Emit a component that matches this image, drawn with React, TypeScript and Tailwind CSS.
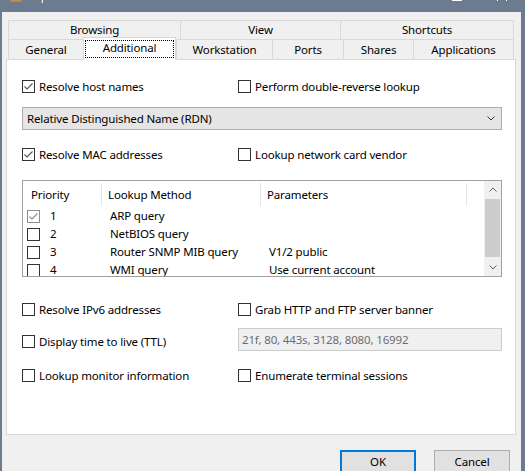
import type { ReactNode } from "react";

function Check({ checked = false, muted = false }: { checked?: boolean; muted?: boolean }) {
  return (
    <span
      className={[
        "flex h-[13px] w-[13px] shrink-0 items-center justify-center border bg-white",
        muted ? "border-[#8c8c8c]" : "border-[#333333]",
      ].join(" ")}
    >
      {checked && (
        <svg width="11" height="11" viewBox="0 0 11 11">
          <path d="M1.5 5.5 L4 8 L9.5 2.5" fill="none" stroke={muted ? "#8c8c8c" : "#555555"} strokeWidth="1.1" />
        </svg>
      )}
    </span>
  );
}

function CheckLabel({ children, checked }: { children: ReactNode; checked?: boolean }) {
  return (
    <label className="flex h-[17px] items-center gap-[4px]">
      <Check checked={checked} />
      <span className="whitespace-nowrap">{children}</span>
    </label>
  );
}

function Chevron({ up = false, color = "#606060" }: { up?: boolean; color?: string }) {
  return (
    <svg width="8" height="5" viewBox="0 0 8 5">
      <path d={up ? "M0.5 4.5 L4 1 L7.5 4.5" : "M0.5 0.5 L4 4 L7.5 0.5"} fill="none" stroke={color} strokeWidth="1" />
    </svg>
  );
}

const topTabs = [
  { label: "Browsing", w: "w-[172px]" },
  { label: "View", w: "w-[160px]" },
  { label: "Shortcuts", w: "w-[174px] border-r" },
];

const lowTabs = [
  { label: "General", w: "w-[75px]" },
  { label: "Additional", w: "w-[93px]", active: true },
  { label: "Workstation", w: "w-[96px]" },
  { label: "Ports", w: "w-[71px]" },
  { label: "Shares", w: "w-[70px]" },
  { label: "Applications", w: "w-[101px] border-r" },
];

const methods = [
  { n: 1, name: "ARP query", params: "", on: true },
  { n: 2, name: "NetBIOS query", params: "" },
  { n: 3, name: "Router SNMP MIB query", params: "V1/2 public" },
  { n: 4, name: "WMI query", params: "Use current account" },
];

export default function App() {
  return (
    <div className="h-[471px] w-[525px] overflow-hidden bg-[#6c7b90] font-['Noto_Sans',sans-serif] text-[11.5px] tracking-[-0.15px] text-black">
      {/* title bar, mostly cropped */}
      <div className="h-[12px] overflow-hidden">
        <div className="-mt-[13px] flex h-[18px] items-center pl-[10px] pr-[18px]">
          <span className="h-[12px] w-[12px] rounded-[2px] bg-[#c8874a]" />
          <span className="ml-[10px] text-white">Options</span>
          <div className="ml-auto flex items-center gap-[35px]">
            <svg width="10" height="10" viewBox="0 0 10 10">
              <rect x="0" y="9" width="10" height="1" fill="#ffffff" />
            </svg>
            <svg width="10" height="10" viewBox="0 0 10 10">
              <path d="M0 0 L10 10 M10 0 L0 10" stroke="#ffffff" strokeWidth="1" />
            </svg>
          </div>
        </div>
      </div>

      <div className="ml-[2px] mr-[4px] h-[459px] bg-[#f0f0f0] pl-[4px] pt-[8px]">
        {/* tabs */}
        <div className="ml-[2px] flex h-[19px]">
          {topTabs.map((t) => (
            <div
              key={t.label}
              className={`flex items-center justify-center border-l border-t border-[#d9d9d9] ${t.w}`}
            >
              {t.label}
            </div>
          ))}
        </div>
        <div className="ml-[2px] flex h-[20px] items-start">
          {lowTabs.map((t) =>
            t.active ? (
              <div
                key={t.label}
                className={`relative z-10 -mt-[2px] h-[23px] border-l border-r border-t border-[#d9d9d9] bg-white ${t.w}`}
              >
                <div className="mx-[1px] mt-[2px] flex h-[18px] items-center justify-center border border-dotted border-black pb-[2px]">
                  {t.label}
                </div>
              </div>
            ) : (
              <div
                key={t.label}
                className={`flex h-[20px] items-center justify-center border-l border-t border-[#d9d9d9] pt-[1px] ${t.w}`}
              >
                {t.label}
              </div>
            )
          )}
        </div>

        {/* panel */}
        <div className="h-[376px] w-[510px] border border-[#d9d9d9] bg-white pl-[15px] pt-[18px]">
          <div className="grid w-[480px] grid-cols-[216px_1fr]">
            <CheckLabel checked>Resolve host names</CheckLabel>
            <CheckLabel>Perform double-reverse lookup</CheckLabel>
          </div>

          <div className="mt-[12px] flex h-[23px] w-[480px] items-center border border-[#adadad] bg-[#e5e5e5] pl-[4px] pr-[6px]">
            <span>Relative Distinguished Name (RDN)</span>
            <span className="ml-auto">
              <Chevron color="#333333" />
            </span>
          </div>

          <div className="mt-[16px] grid w-[480px] grid-cols-[216px_1fr]">
            <CheckLabel checked>Resolve MAC addresses</CheckLabel>
            <CheckLabel>Lookup network card vendor</CheckLabel>
          </div>

          {/* list view */}
          <div className="mt-[17px] flex h-[97px] w-[480px] overflow-hidden border border-[#a0a0a0]">
            <div className="w-[461px]">
              <div className="flex h-[26px] pb-[1px] pt-[2px]">
                <div className="flex w-[79px] items-center border-r border-[#e5e5e5] pl-[8px]">Priority</div>
                <div className="flex w-[159px] items-center border-r border-[#e5e5e5] pl-[6px]">Lookup Method</div>
                <div className="flex w-[206px] items-center border-r border-[#e5e5e5] pl-[6px]">Parameters</div>
              </div>
              {methods.map((m) => (
                <div key={m.n} className="flex h-[18px] items-center">
                  <div className="flex w-[79px] items-center pl-[4px]">
                    <Check checked={m.on} muted={m.on} />
                    <span className="ml-[10px]">{m.n}</span>
                  </div>
                  <div className="w-[159px] whitespace-nowrap pl-[8px]">{m.name}</div>
                  <div className="w-[206px] whitespace-nowrap pl-[8px]">{m.params}</div>
                </div>
              ))}
            </div>
            <div className="flex w-[17px] flex-col bg-[#f0f0f0]">
              <div className="flex h-[17px] items-center justify-center">
                <Chevron up />
              </div>
              <div className="mx-[1px] mt-[1px] h-[58px] bg-[#cdcdcd]" />
              <div className="mt-auto flex h-[17px] items-center justify-center">
                <Chevron />
              </div>
            </div>
          </div>

          <div className="mt-[24px] grid w-[480px] grid-cols-[216px_1fr]">
            <CheckLabel>Resolve IPv6 addresses</CheckLabel>
            <CheckLabel>Grab HTTP and FTP server banner</CheckLabel>
          </div>

          <div className="mt-[10px] grid h-[23px] w-[480px] grid-cols-[216px_1fr]">
            <div className="flex items-center gap-[4px] pt-[4px]">
              <Check />
              <span>Display time to live (TTL)</span>
            </div>
            <div className="flex h-[23px] items-center border border-[#cccccc] bg-[#f0f0f0] pl-[3px] text-[#6d6d6d]">
              21f, 80, 443s, 3128, 8080, 16992
            </div>
          </div>

          <div className="mt-[16px] grid w-[480px] grid-cols-[216px_1fr]">
            <CheckLabel>Lookup monitor information</CheckLabel>
            <CheckLabel>Enumerate terminal sessions</CheckLabel>
          </div>
        </div>

        {/* buttons */}
        <div className="mt-[15px] flex w-[510px] justify-end gap-[18px] pr-[6px]">
          <button className="flex h-[23px] w-[76px] items-center justify-center border-2 border-[#0078d7] bg-[#e1e1e1]">
            OK
          </button>
          <button className="flex h-[23px] w-[76px] items-center justify-center border border-[#adadad] bg-[#e1e1e1]">
            Cancel
          </button>
        </div>
      </div>
    </div>
  );
}
